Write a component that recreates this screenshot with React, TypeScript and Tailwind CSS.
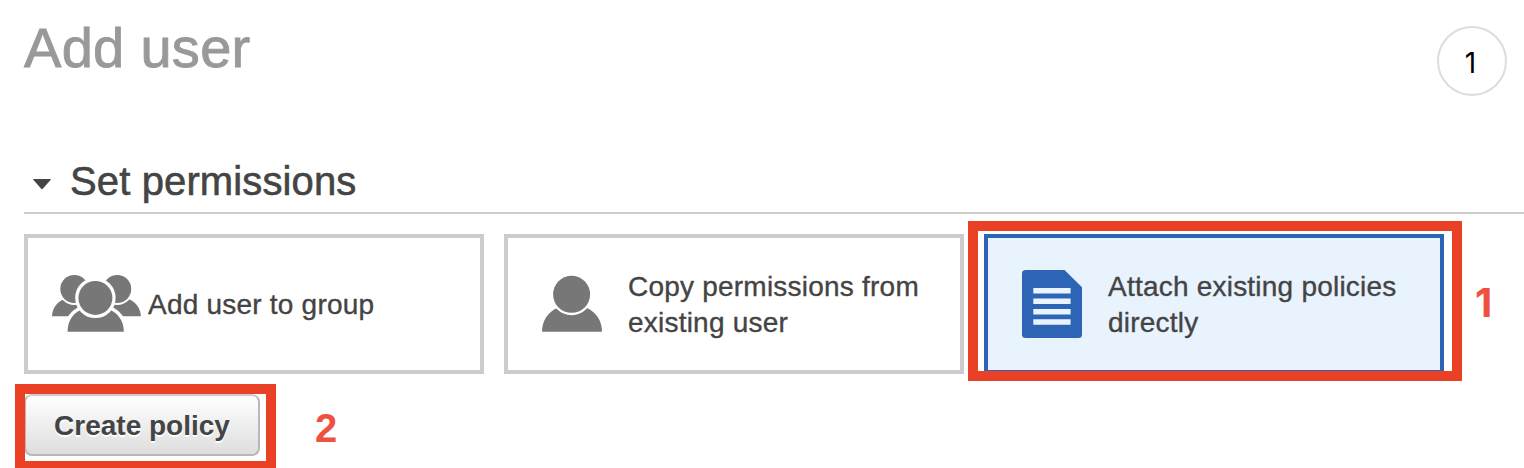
import type { ReactNode } from "react";

function GroupIcon() {
  return (
    <svg className="block h-[60px] w-[92px]" viewBox="50 274 92 60" fill="#777">
      <path d="M52 316.3C52 309 57 300 68 298H84V316.3Z" />
      <path d="M140.8 316.3C140.8 309 135.8 300 124.8 298H108V316.3Z" />
      <g stroke="#fff" strokeWidth="4" paintOrder="stroke">
        <circle cx="74.3" cy="289" r="14" />
        <circle cx="117.2" cy="289" r="14" />
      </g>
      <path
        d="M67.6 331.8C67.6 322 71.5 315 79.5 310.5H111.5C119.5 315 123.8 322 123.8 331.8Z"
        stroke="#fff"
        strokeWidth="7"
        paintOrder="stroke"
      />
      <circle cx="95.4" cy="297.9" r="17" stroke="#fff" strokeWidth="6.4" paintOrder="stroke" />
    </svg>
  );
}

function UserIcon() {
  return (
    <svg className="block h-[60px] w-[60px]" viewBox="542 274 60 60" fill="#777">
      <path d="M542 331.7C542 321 548 312 557 308H587C596 312 602 321 602 331.7Z" />
      <circle cx="571.6" cy="294.3" r="18.5" stroke="#fff" strokeWidth="4.8" paintOrder="stroke" />
    </svg>
  );
}

function PolicyIcon() {
  return (
    <svg className="block h-[68px] w-[60px]" viewBox="0 0 60 68">
      <path
        fill="#2e64b6"
        d="M3.5 0H42.5L60 17.2V64.5Q60 68 56.5 68H3.5Q0 68 0 64.5V3.5Q0 0 3.5 0Z"
      />
      <path fill="#e8f3fe" d="M11.3 18H48.6V23.5H11.3ZM11.3 28.5H48.6V34H11.3ZM11.3 39H48.6V44.5H11.3ZM11.3 49.2H48.6V54.8H11.3Z" />
    </svg>
  );
}

function Card({ icon, children, selected = false, compact = false }: {
  icon: ReactNode;
  children: ReactNode;
  selected?: boolean;
  compact?: boolean;
}) {
  return (
    <div
      className={`flex h-[140px] w-[460px] shrink-0 items-center border-4 text-[28px] leading-9 tracking-[0.22px] ${
        selected ? "border-[#2e64b6] bg-[#e8f3fe]" : "border-[#ccc] bg-white"
      } ${compact ? "gap-1.5 pl-[22px]" : "gap-[26px] pl-[34px]"}`}
    >
      {icon}
      <div className="pt-0.5 whitespace-nowrap [-webkit-text-stroke:0.35px_#444]">{children}</div>
    </div>
  );
}

export default function App() {
  return (
    <div className="h-[468px] w-[1524px] overflow-hidden bg-white pl-6 font-['Liberation_Sans',Arial,sans-serif] text-[#444]">
      <header className="flex h-[152px] justify-between pr-[17px]">
        <h1 className="pt-4 text-[56px] leading-[64px] tracking-[0.3px] text-[#999] [-webkit-text-stroke:0.9px_#999]">Add user</h1>
        <div className="mt-[26px] flex size-[70px] items-center justify-center rounded-full border-2 border-[#ddd] pt-1 pr-[3px] font-[Inter,sans-serif] text-[28px] text-black">
          1
        </div>
      </header>

      <div className="flex h-[62px] items-center gap-[18px] border-b-2 border-[#ccc] pl-2">
        <svg className="mt-1 h-[11px] w-5" viewBox="0 0 20 11">
          <path d="M1.8 0H18.2Q19.5 0 18.5 1L11 9.6Q10 10.8 9 9.6L1.5 1Q.5 0 1.8 0Z" fill="#444" />
        </svg>
        <h2 className="pb-[3px] text-[40px] leading-[48px] tracking-[0.13px] [-webkit-text-stroke:0.6px_#444]">Set permissions</h2>
      </div>

      <div className="flex items-center gap-5 pt-5">
        <Card compact icon={<GroupIcon />}>Add user to group</Card>
        <Card icon={<UserIcon />}>Copy permissions from<br />existing user</Card>
        <div className="relative">
          <Card selected icon={<PolicyIcon />}>Attach existing policies<br />directly</Card>
          <div className="absolute -left-4 -top-[13px] h-[160px] w-[494px] border-10 border-[#ea4025]" />
        </div>
        <span className="ml-[11px] pb-[3px] font-[Inter,sans-serif] text-[40px] leading-10 font-bold text-[#ee5140]">1</span>
      </div>

      <div className="flex items-start gap-[55px] pt-5">
        <div className="relative">
          <button className="block h-[62px] w-[236px] rounded-lg border-2 border-[#b8b8b8] border-t-[#ccc] bg-linear-to-b from-white to-[#dedede] pt-0.5 text-[28px] font-bold text-[#444] [text-shadow:0_2px_0_#fff]">
            Create policy
          </button>
          <div className="absolute -left-[9px] -top-2.5 h-[87px] w-[261px] border-10 border-[#ea4025]" />
        </div>
        <span className="pt-[11px] text-[40px] leading-[46px] font-bold text-[#ee5140]">2</span>
      </div>
    </div>
  );
}
